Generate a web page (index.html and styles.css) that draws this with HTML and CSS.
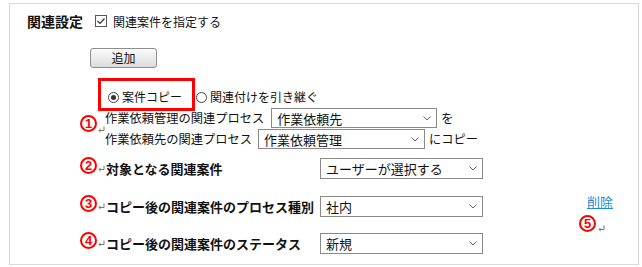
FILE: index.html
```html
<!DOCTYPE html>
<html lang="ja">
<head>
    <meta charset="UTF-8">
    <meta name="viewport" content="width=device-width, initial-scale=1.0">
    <title>関連設定</title>
    <link rel="stylesheet" href="styles.css">
</head>
<body>
    <div class="frame">
        <div class="heading">
            <span class="title">関連設定</span>
            <span class="check">
                <svg width="12" height="12" viewBox="0 0 12 12"><rect x="0.5" y="0.5" width="11" height="11" fill="#fff" stroke="#555"/><path d="M2.5 6 L5 8.5 L9.5 3.5" fill="none" stroke="#333" stroke-width="1.2"/></svg>
            </span>
            <span>関連案件を指定する</span>
        </div>

        <button class="add-btn">追加</button>

        <div class="options">
            <label class="option highlight"><span class="radio checked"></span>案件コピー</label>
            <label class="option plain"><span class="radio"></span>関連付けを引き継ぐ</label>
        </div>

        <div class="copy-block">
            <span class="marker">
                <span class="num">1</span>
                <svg class="ret" width="7" height="7" viewBox="0 0 7 7"><path d="M6 0.5 V4.5 H1.5" fill="none" stroke="#777"/><path d="M0.5 4.5 L2.5 2.5 V6.5 Z" fill="#777"/></svg>
            </span>
            <div class="copy-lines">
                <div class="copy-line">
                    <span class="copy-label">作業依頼管理の関連プロセス</span>
                    <div class="dropdown first">作業依頼先<svg class="chev" width="8" height="5" viewBox="0 0 8 5"><path d="M0.5 0.5 L4 4 L7.5 0.5" fill="none" stroke="#666"/></svg></div>
                    <span class="suffix">を</span>
                </div>
                <div class="copy-line">
                    <span class="copy-label">作業依頼先の関連プロセス</span>
                    <div class="dropdown second">作業依頼管理<svg class="chev" width="8" height="5" viewBox="0 0 8 5"><path d="M0.5 0.5 L4 4 L7.5 0.5" fill="none" stroke="#666"/></svg></div>
                    <span class="suffix">にコピー</span>
                </div>
            </div>
        </div>

        <div class="settings">
            <div class="rows">
                <div class="row">
                    <span class="row-label">
                        <span class="num">2</span>
                        <svg class="ret" width="7" height="7" viewBox="0 0 7 7"><path d="M6 0.5 V4.5 H1.5" fill="none" stroke="#777"/><path d="M0.5 4.5 L2.5 2.5 V6.5 Z" fill="#777"/></svg>
                        <b>対象となる関連案件</b>
                    </span>
                    <div class="dropdown">ユーザーが選択する<svg class="chev" width="8" height="5" viewBox="0 0 8 5"><path d="M0.5 0.5 L4 4 L7.5 0.5" fill="none" stroke="#666"/></svg></div>
                </div>
                <div class="row">
                    <span class="row-label">
                        <span class="num">3</span>
                        <svg class="ret" width="7" height="7" viewBox="0 0 7 7"><path d="M6 0.5 V4.5 H1.5" fill="none" stroke="#777"/><path d="M0.5 4.5 L2.5 2.5 V6.5 Z" fill="#777"/></svg>
                        <b>コピー後の関連案件のプロセス種別</b>
                    </span>
                    <div class="dropdown">社内<svg class="chev" width="8" height="5" viewBox="0 0 8 5"><path d="M0.5 0.5 L4 4 L7.5 0.5" fill="none" stroke="#666"/></svg></div>
                </div>
                <div class="row">
                    <span class="row-label">
                        <span class="num">4</span>
                        <svg class="ret" width="7" height="7" viewBox="0 0 7 7"><path d="M6 0.5 V4.5 H1.5" fill="none" stroke="#777"/><path d="M0.5 4.5 L2.5 2.5 V6.5 Z" fill="#777"/></svg>
                        <b>コピー後の関連案件のステータス</b>
                    </span>
                    <div class="dropdown">新規<svg class="chev" width="8" height="5" viewBox="0 0 8 5"><path d="M0.5 0.5 L4 4 L7.5 0.5" fill="none" stroke="#666"/></svg></div>
                </div>
            </div>
            <div class="side">
                <a href="#" class="delete">削除</a>
                <span class="side-mark">
                    <span class="num">5</span>
                    <svg class="ret" width="7" height="7" viewBox="0 0 7 7"><path d="M6 0.5 V4.5 H1.5" fill="none" stroke="#777"/><path d="M0.5 4.5 L2.5 2.5 V6.5 Z" fill="#777"/></svg>
                </span>
            </div>
        </div>
    </div>
</body>
</html>
```

FILE: styles.css
```css
body {
    margin: 0;
    font-family: "Noto Sans CJK JP", sans-serif;
    font-size: 12px;
    color: #111;
    background: #fff;
}

.frame {
    box-sizing: border-box;
    width: 630px;
    height: 262px;
    margin: 3px 0 0 9px;
    border: 1px solid #d9d9d9;
    padding: 7px 0 0 17px;
}

.heading {
    display: flex;
    align-items: center;
    height: 20px;
}

.title {
    font-weight: bold;
    font-size: 14px;
    margin-right: 12px;
}

.check {
    display: flex;
    margin-right: 6px;
}

.add-btn {
    display: block;
    margin: 17px 0 0 63px;
    width: 67px;
    height: 20px;
    padding: 0;
    border: 1px solid #8e8e8e;
    border-radius: 3px;
    background: linear-gradient(#fbfbfb, #dcdcdc);
    font-family: "Noto Sans CJK JP", sans-serif;
    font-size: 12px;
    line-height: 18px;
    color: #111;
}

.options {
    display: flex;
    align-items: flex-end;
    margin: 10px 0 0 71px;
}

.option {
    display: flex;
    align-items: center;
    gap: 3px;
    line-height: 14px;
}

.highlight {
    border: 3px solid #f00;
    padding: 9px 10px 4px 7px;
}

.plain {
    margin: 0 0 7px 1px;
}

.radio {
    box-sizing: border-box;
    width: 11px;
    height: 11px;
    border: 1px solid #444;
    border-radius: 50%;
    background: #fff;
    display: flex;
    align-items: center;
    justify-content: center;
}

.radio.checked::after {
    content: "";
    width: 5px;
    height: 5px;
    border-radius: 50%;
    background: #333;
}

.num {
    box-sizing: border-box;
    width: 17px;
    height: 17px;
    border: 2px solid #f00;
    border-radius: 50%;
    color: #f00;
    font-family: "Liberation Sans", sans-serif;
    font-weight: bold;
    font-size: 13px;
    line-height: 13px;
    text-align: center;
    flex-shrink: 0;
}

.ret {
    flex-shrink: 0;
}

.copy-block {
    display: flex;
    margin: -3px 0 0 53px;
}

.marker {
    display: flex;
    align-items: flex-end;
    width: 25px;
    padding-top: 4px;
    height: 20px;
}

.marker .ret {
    margin: 0 0 -1px 1px;
}

.copy-lines {
    display: flex;
    flex-direction: column;
    gap: 1px;
}

.copy-line {
    display: flex;
    align-items: center;
    height: 20px;
    font-size: 12.25px;
}

.copy-label {
    margin-right: 7px;
}

.dropdown {
    box-sizing: border-box;
    height: 21px;
    border: 1px solid #8a8a8a;
    background: #fff;
    display: flex;
    align-items: center;
    justify-content: space-between;
    padding: 0 5px 0 5px;
    font-size: 13px;
    color: #111;
}

.dropdown.first {
    width: 166px;
    height: 20px;
}

.dropdown.second {
    width: 167px;
    height: 20px;
    margin-left: -1px;
}

.suffix {
    margin-left: 4px;
}

.settings {
    display: flex;
    margin: 8px 0 0 53px;
}

.rows {
    display: flex;
    flex-direction: column;
    gap: 16.5px;
}

.row {
    display: grid;
    grid-template-columns: 240px 163px;
    align-items: center;
    height: 21px;
}

.row-label {
    display: flex;
    align-items: center;
}

.row-label .num {
    margin-bottom: 6px;
}

.row-label .ret {
    margin: 0 1px 0 1px;
}

.row-label b {
    font-size: 13px;
}

.side {
    display: flex;
    flex-direction: column;
    align-items: flex-start;
    margin: 38px 0 0 104px;
}

.delete {
    color: #1a8bd6;
    font-size: 13px;
    line-height: 14px;
}

.side-mark {
    display: flex;
    align-items: flex-end;
    margin: 6px 0 0 -8px;
}

.side-mark .ret {
    margin-left: 2px;
}
```
